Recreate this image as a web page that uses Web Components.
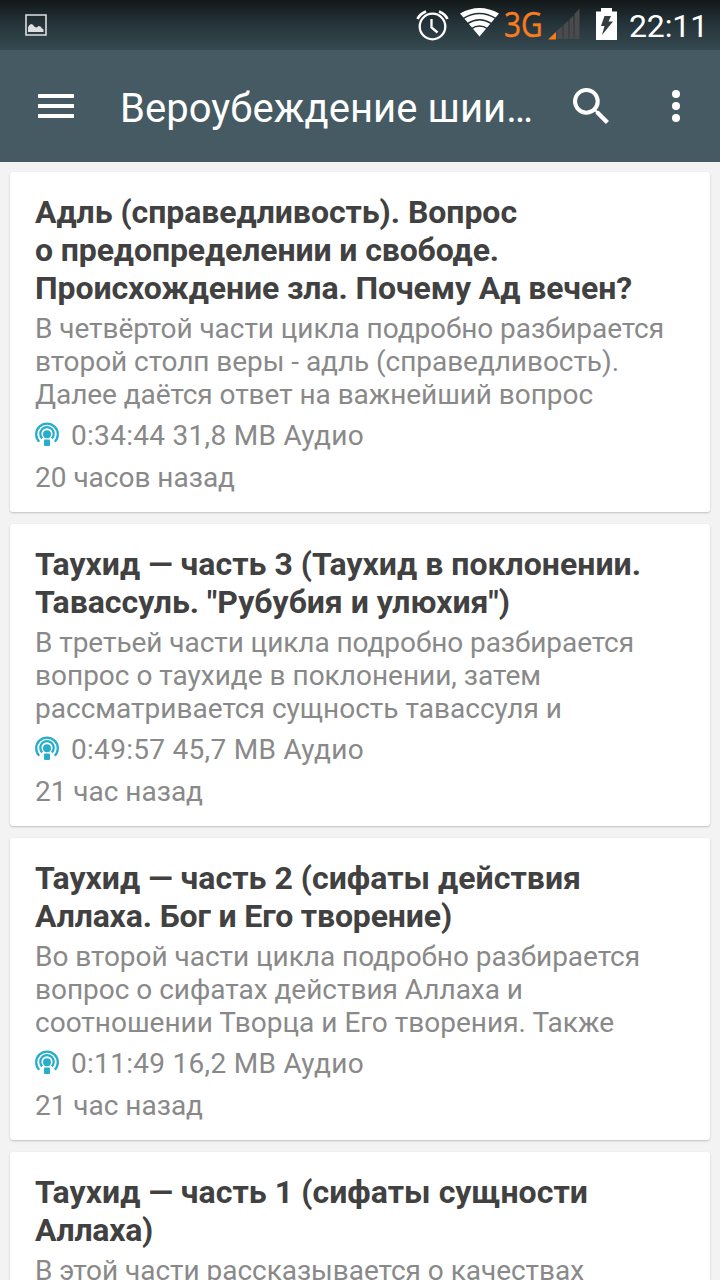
<!DOCTYPE html>
<html lang="ru">
<head>
<meta charset="utf-8">
<title>Вероубеждение шиитов</title>
<style>
html,body{margin:0;height:100%}
body{font-family:Roboto,"Noto Sans",sans-serif;background:#f3f3f3;overflow:hidden}
</style>
</head>
<body>
<podcast-app>
<episode-card title-lines="Адль (справедливость). Вопрос|о предопределении и свободе.|Происхождение зла. Почему Ад вечен?" title-widths="482|464|597" text-lines="В четвёртой части цикла подробно разбирается|второй столп веры - адль (справедливость).|Далее даётся ответ на важнейший вопрос" text-widths="629|584|558" meta="0:34:44 31,8 MB Аудио" ago="20 часов назад" ago-width="200"></episode-card>
<episode-card title-lines="Таухид — часть 3 (Таухид в поклонении.|Тавассуль. &quot;Рубубия и улюхия&quot;)" title-widths="606|475" text-lines="В третьей части цикла подробно разбирается|вопрос о таухиде в поклонении, затем|рассматривается сущность тавассуля и" text-widths="599|506|527" meta="0:49:57 45,7 MB Аудио" ago="21 час назад" ago-width="168"></episode-card>
<episode-card title-lines="Таухид — часть 2 (сифаты действия|Аллаха. Бог и Его творение)" title-widths="546|417" text-lines="Во второй части цикла подробно разбирается|вопрос о сифатах действия Аллаха и|соотношении Творца и Его творения. Также" text-widths="605|488|579" meta="0:11:49 16,2 MB Аудио" ago="21 час назад" ago-width="168"></episode-card>
<episode-card title-lines="Таухид — часть 1 (сифаты сущности|Аллаха)" title-widths="553|118" text-lines="В этой части рассказывается о качествах" text-widths="549"></episode-card>
</podcast-app>
<script>
/* One line of text, tracked so that it fills the given width. */
customElements.define('fit-line', class extends HTMLElement {
  connectedCallback() {
    const root = this.attachShadow({mode: 'open'});
    root.innerHTML = '<style>:host{display:block;white-space:nowrap}span{display:inline-block}</style><span></span>';
    const span = root.querySelector('span');
    span.textContent = this.getAttribute('text');
    const want = Number(this.getAttribute('width'));
    if (want) {
      const have = span.getBoundingClientRect().width;
      span.style.letterSpacing = ((want - have) / span.textContent.length) + 'px';
    }
  }
});

customElements.define('status-bar', class extends HTMLElement {
  connectedCallback() {
    this.attachShadow({mode: 'open'}).innerHTML = `
<style>
:host{display:flex;align-items:center;height:50px;box-sizing:border-box;background:linear-gradient(#131819,#25343a 48%,#354950);color:#fff}
svg{display:block;flex:none}
.pic{margin-left:25px}
.alarm{margin-left:auto}
.wifi{margin-left:11px}
.net{color:#f97d1c;font:35.500px/46px "Open Sans","Noto Sans",sans-serif;-webkit-text-stroke:.4px #f97d1c;margin-left:5px;width:40px;height:50px;white-space:nowrap}
.net span{display:inline-block;transform:scaleX(.84);transform-origin:0 50%}
.sig{margin-left:4px}
.bat{margin-left:16px}
.clock{font-size:32px;line-height:50px;width:78px;margin:1px 13px 0 12px}
</style>
<svg class="pic" width="22" height="22" viewBox="0 0 22 22"><path d="M1 1h20v20H1z" fill="none" stroke="#dcdedf" stroke-width="1.600"/><path d="M3 18v-4.500l1-2 2-1.500 2 .8 1.500 2 2 .8 2-1.600 2 .5 1.500 2 1.500.8V18z" fill="#dcdedf"/></svg>
<svg class="alarm" width="33" height="32" viewBox="0 0 33 32" fill="none" stroke="#fff"><circle cx="16.500" cy="17.500" r="12.800" stroke-width="2.300"/><path d="M15.500 10v8.500l6 5" stroke-width="2.300"/><path d="M1.500 10Q4 5 10 2.600M23 2.600Q29 5 31.500 10" stroke-width="2.700"/></svg>
<svg class="wifi" width="39" height="30" viewBox="0 0 39 30" style="transform:translateY(-3px)"><path d="M0 6.500Q19.500-4.500 39 6.500L19.500 29.500z" fill="#fff"/><g fill="none" stroke="#222e33" stroke-width="1.500"><path d="M3 11.700Q19.500 1.500 36 11.700M7.500 16.700Q19.500 9 31.500 16.700M11.500 21.700Q19.500 16.500 27.500 21.700"/></g></svg>
<div class="net"><span>3G</span></div>
<svg class="sig" width="32" height="32" viewBox="0 0 32 32" style="transform:translateY(-1px)"><path d="M0 31.500L8 24v7.500z" fill="#f97d1c"/><path d="M8.500 31V23l6-5v13zM15.500 31V17l5-4.500V31zM21.500 31V11.500l4-4V31zM26.500 31V6l5-5.500V31z" fill="#4b4b4b"/></svg>
<svg class="bat" width="21" height="32" viewBox="0 0 21 32" style="transform:translateY(-1px)"><path d="M0 3.500h5V0h11v3.500h5V32H0z" fill="#fff"/><path d="M8.500 8H15l-2.500 5.500H17L6 27l2.500-9H5z" fill="#343c3f"/></svg>
<div class="clock"><fit-line text="22:11" width="79"></fit-line></div>`;
  }
});

customElements.define('app-bar', class extends HTMLElement {
  connectedCallback() {
    this.attachShadow({mode: 'open'}).innerHTML = `
<style>
:host{display:flex;align-items:center;height:112px;box-sizing:border-box;background:#455a62;color:#fff}
svg{display:block;flex:none}
.menu{margin-left:38px}
.name{font-size:40px;line-height:48px;margin:6px 0 0 46px;width:412px}
.find{margin-left:41px}
.more{margin-left:63px}
</style>
<svg class="menu" width="36" height="24" viewBox="0 0 36 24" fill="#fff"><path d="M0 0h36v4H0zM0 10h36v4H0zM0 20h36v4H0z"/></svg>
<div class="name"><fit-line text="Вероубеждение шии…" width="413"></fit-line></div>
<svg class="find" width="36" height="36" viewBox="3 3 17.500 17.500" fill="#fff"><path d="M15.500 14h-.790l-.280-.270A6.471 6.471 0 0 0 16 9.500 6.500 6.500 0 1 0 9.500 16c1.610 0 3.090-.590 4.230-1.570l.270.280v.790l5 4.990L20.490 19l-4.990-5zm-6 0C7.010 14 5 11.990 5 9.500S7.010 5 9.500 5 14 7.010 14 9.500 11.990 14 9.500 14z"/></svg>
<svg class="more" width="8" height="32" viewBox="0 0 8 32" fill="#fff"><circle cx="4" cy="4" r="4"/><circle cx="4" cy="16" r="4"/><circle cx="4" cy="28" r="4"/></svg>`;
  }
});

customElements.define('episode-card', class extends HTMLElement {
  lines(kind) {
    const widths = (this.getAttribute(kind + '-widths') || '').split('|');
    return this.getAttribute(kind + '-lines').split('|').map((t, i) =>
      `<fit-line text="${t.replace(/"/g, '&quot;')}" width="${widths[i]}"></fit-line>`).join('');
  }
  connectedCallback() {
    const meta = this.getAttribute('meta');
    this.attachShadow({mode: 'open'}).innerHTML = `
<style>
:host{display:block;flex:none;box-sizing:border-box;background:#fff;border-radius:3px;padding:21px 25px 18px;box-shadow:0 1px 2px rgba(0,0,0,.22)}
h2{margin:0;font-size:32px;line-height:38px;font-weight:700;color:#414141}
.text{margin-top:5px}
.text,.meta,.ago{font-size:28px;line-height:33px;color:#898989}
.meta{display:flex;align-items:center;gap:12px;margin-top:8px}
.ago{margin-top:9px}
svg{display:block;margin-top:-3px}
</style>
<h2>${this.lines('title')}</h2>
<div class="text">${this.lines('text')}</div>
${meta ? `<div class="meta"><svg width="24" height="25" viewBox="0 0 24 25"><g fill="none" stroke="#27aecb" stroke-width="2.300"><path d="M4.200 19.800A10.800 10.800 0 1 1 19.800 19.800"/><path d="M7.200 16.400A6.700 6.700 0 1 1 16.800 16.400"/></g><circle cx="12" cy="12.300" r="4" fill="#27aecb"/><rect x="9" y="17.500" width="6" height="6.500" rx="1" fill="#27aecb"/></svg><fit-line text="${meta}" width="293"></fit-line></div>
<div class="ago"><fit-line text="${this.getAttribute('ago')}" width="${this.getAttribute('ago-width')}"></fit-line></div>` : ''}`;
  }
});

customElements.define('podcast-app', class extends HTMLElement {
  connectedCallback() {
    this.attachShadow({mode: 'open'}).innerHTML = `
<style>
:host{display:flex;flex-direction:column;width:720px;height:1280px;overflow:hidden}
main{flex:1;min-height:0;display:flex;flex-direction:column;gap:12px;padding:10px 10px 0;overflow:hidden}
</style>
<status-bar></status-bar><app-bar></app-bar><main><slot></slot></main>`;
  }
});
</script>
</body>
</html>
